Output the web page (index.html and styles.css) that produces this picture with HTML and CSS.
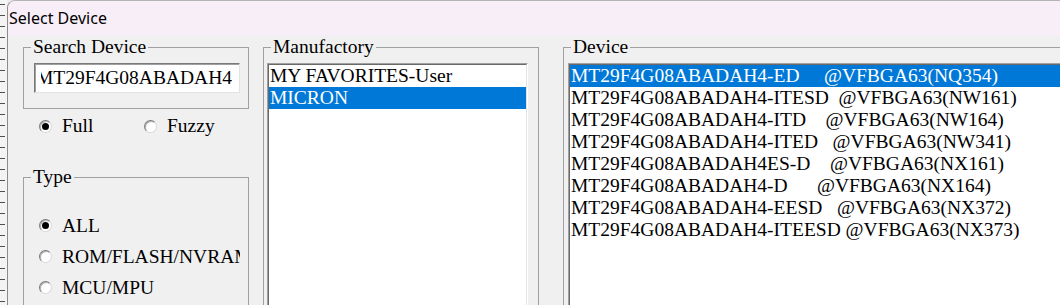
FILE: index.html
```html
<!DOCTYPE html>
<html lang="en">
<head>
    <meta charset="UTF-8">
    <title>Select Device</title>
    <link rel="stylesheet" href="styles.css">
</head>
<body>
    <div class="screen">
        <div class="ruler"></div>

        <div class="window">
            <div class="titlebar">Select Device</div>

            <div class="content">
                <div class="left-col">
                    <fieldset class="group search-group">
                        <legend>Search Device</legend>
                        <div class="search-input">
                            <div class="search-text"><span>MT29F4G08ABADAH4</span></div>
                        </div>
                    </fieldset>

                    <div class="match-mode">
                        <label class="radio-item"><span class="radio checked"></span>Full</label>
                        <label class="radio-item"><span class="radio"></span>Fuzzy</label>
                    </div>

                    <fieldset class="group type-group">
                        <legend>Type</legend>
                        <div class="type-options">
                            <label class="radio-item"><span class="radio checked"></span>ALL</label>
                            <label class="radio-item"><span class="radio"></span>ROM/FLASH/NVRAM</label>
                            <label class="radio-item"><span class="radio"></span>MCU/MPU</label>
                        </div>
                    </fieldset>
                </div>

                <fieldset class="group maker-group">
                    <legend>Manufactory</legend>
                    <div class="listbox">
                        <ul class="items">
                            <li>MY FAVORITES-User</li>
                            <li class="selected">MICRON</li>
                        </ul>
                    </div>
                </fieldset>

                <fieldset class="group device-group">
                    <legend>Device</legend>
                    <div class="listbox">
                        <ul class="items">
                            <li class="selected">MT29F4G08ABADAH4-ED     @VFBGA63(NQ354)</li>
                            <li>MT29F4G08ABADAH4-ITESD  @VFBGA63(NW161)</li>
                            <li>MT29F4G08ABADAH4-ITD    @VFBGA63(NW164)</li>
                            <li>MT29F4G08ABADAH4-ITED   @VFBGA63(NW341)</li>
                            <li>MT29F4G08ABADAH4ES-D    @VFBGA63(NX161)</li>
                            <li>MT29F4G08ABADAH4-D      @VFBGA63(NX164)</li>
                            <li>MT29F4G08ABADAH4-EESD   @VFBGA63(NX372)</li>
                            <li>MT29F4G08ABADAH4-ITEESD @VFBGA63(NX373)</li>
                        </ul>
                    </div>
                </fieldset>
            </div>
        </div>
    </div>
</body>
</html>
```

FILE: styles.css
```css
* {
    margin: 0;
    padding: 0;
    box-sizing: border-box;
}

body {
    width: 1060px;
    height: 305px;
    overflow: hidden;
    background: #f0f0f0;
    color: #000;
    font-family: 'Liberation Serif', 'Times New Roman', Times, serif;
    font-size: 19.5px;
}

.screen {
    display: flex;
    height: 305px;
}

/* strip of the window behind, on the far left */
.ruler {
    width: 7px;
    flex: none;
    background:
        repeating-linear-gradient(to bottom, #505050 0 1px, transparent 1px 11px) 0 4px / 5px 100% no-repeat,
        #f4f4f4;
}

.window {
    flex: 1;
    min-width: 0;
    overflow: hidden;
    background: #f0f0f0;
    border-left: 1px solid #8c8c8c;
    border-top: 1px solid #b4b4b4;
    border-top-left-radius: 8px;
}

.titlebar {
    height: 35px;
    line-height: 35px;
    padding-left: 1px;
    background: #f8eef7;
    font-family: 'Noto Sans', sans-serif;
    font-size: 16px;
}

.content {
    display: flex;
    align-items: flex-start;
    padding-left: 15px;
}

/* group boxes */
.group {
    border: 1px solid #a0a0a0;
    min-width: 0;
}

.group legend {
    margin-left: 7px;
    padding: 0 2px;
    line-height: 22px;
}

.left-col {
    width: 226px;
    flex: none;
}

.search-input {
    margin: 5px 8px 15px 10px;
    height: 30px;
    padding: 0 7px 0 6px;
    background: #fff;
    border: 1px solid;
    border-color: #7a7a7a #e3e3e3 #e3e3e3 #7a7a7a;
    box-shadow: inset 1px 1px 0 #a0a0a0;
    display: flex;
    align-items: center;
}

.search-text {
    flex: 1;
    display: flex;
    justify-content: flex-end;
    overflow: hidden;
    white-space: nowrap;
}

/* radio buttons */
.radio-item {
    display: flex;
    align-items: center;
    white-space: nowrap;
}

.radio {
    width: 13px;
    height: 13px;
    flex: none;
    margin-right: 10px;
    border-radius: 50%;
    background: #fff;
    border: 1px solid;
    border-color: #7a7a7a #d8d8d8 #d8d8d8 #7a7a7a;
    box-shadow: inset 1px 1px 0 #b0b0b0;
    position: relative;
}

.radio.checked::after {
    content: '';
    position: absolute;
    left: 2px;
    top: 2px;
    width: 7px;
    height: 7px;
    border-radius: 50%;
    background: #000;
}

.match-mode {
    display: flex;
    margin-top: 6px;
    padding-left: 16px;
    height: 22px;
}

.match-mode .radio-item {
    width: 109px;
}

.type-group {
    margin-top: 29px;
    height: 200px;
}

.type-options {
    padding: 22px 0 0 15px;
}

.type-options .radio-item {
    width: 201px;
    height: 31px;
    overflow: hidden;
}

/* list boxes */
.maker-group {
    width: 276px;
    flex: none;
    margin-left: 14px;
}

.device-group {
    width: 560px;
    flex: none;
    margin-left: 24px;
}

.listbox {
    height: 260px;
    margin-top: 5px;
    border: 1px solid;
    border-color: #a0a0a0 #fff #fff #a0a0a0;
}

.maker-group .listbox {
    margin-left: 3px;
    margin-right: 10px;
}

.device-group .listbox {
    margin-left: 4px;
}

.items {
    list-style: none;
    height: 100%;
    background: #fff;
    border: 1px solid;
    border-color: #696969 #e3e3e3 #e3e3e3 #696969;
}

.items li {
    height: 22px;
    line-height: 22px;
    padding-left: 1px;
    white-space: pre;
}

.items li.selected {
    background: #0078d7;
    color: #fff;
}
```
